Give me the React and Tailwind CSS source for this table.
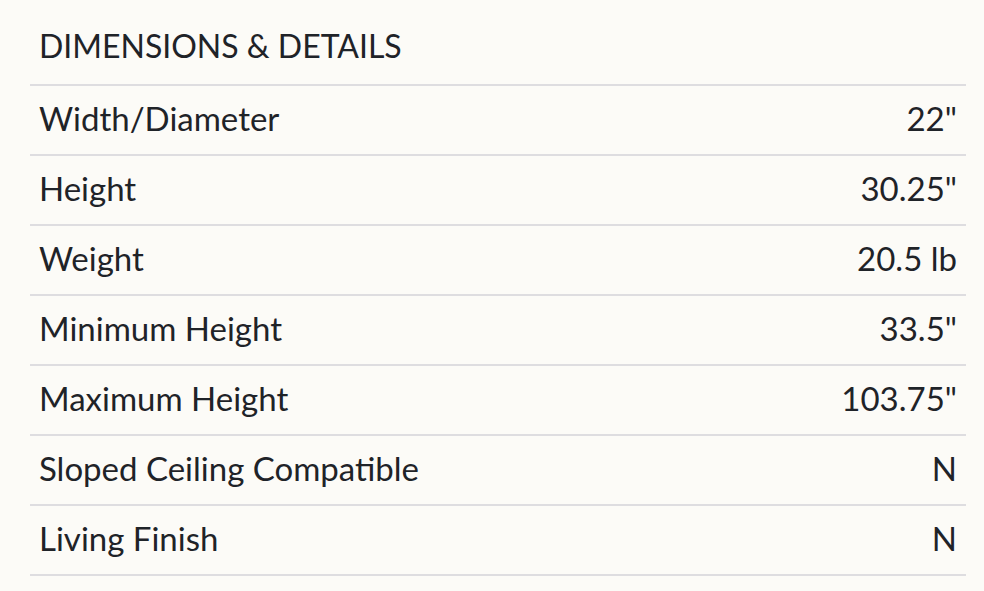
import React from 'react';

const rows = [
  ['Width/Diameter', '22"'],
  ['Height', '30.25"'],
  ['Weight', '20.5 lb'],
  ['Minimum Height', '33.5"'],
  ['Maximum Height', '103.75"'],
  ['Sloped Ceiling Compatible', 'N'],
  ['Living Finish', 'N'],
];

export default function App() {
  return (
    <div className="min-h-[591px] w-full bg-[#fcfbf7] text-[#1f2328]" style={{ fontFamily: 'Lato, "Open Sans", sans-serif' }}>
      <div className="ml-[30px] w-[936px]">
        <h2 className="flex h-[86px] items-center px-[9px] pt-[8px] text-[32px] font-normal uppercase leading-none border-b-2 border-[#dedde0]">
          Dimensions &amp; Details
        </h2>
        <ul>
          {rows.map(([label, value]) => (
            <li key={label} className="flex h-[70px] items-center justify-between px-[9px] pb-[3px] text-[33px] leading-none border-b-2 border-[#dedde0]">
              <span>{label}</span>
              <span>{value}</span>
            </li>
          ))}
        </ul>
      </div>
    </div>
  );
}
